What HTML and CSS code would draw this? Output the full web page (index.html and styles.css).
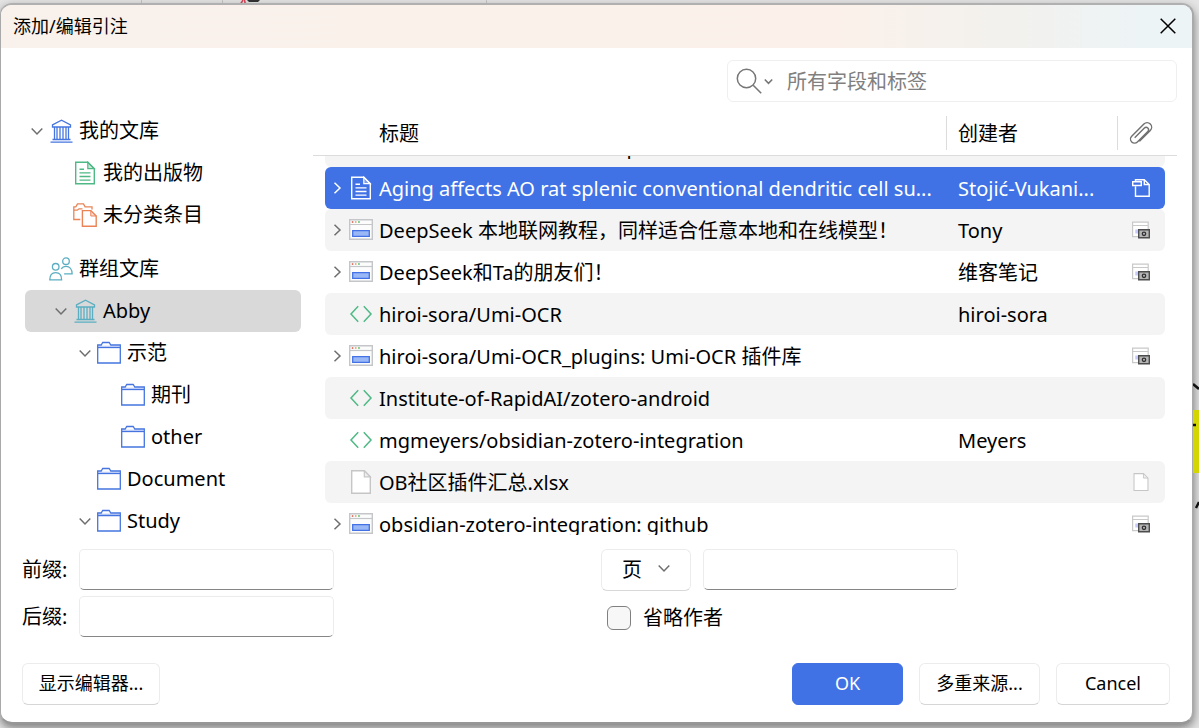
FILE: index.html
```html
<!DOCTYPE html>
<html lang="zh-CN">
<head>
<meta charset="utf-8">
<title>添加/编辑引注</title>
<link rel="stylesheet" href="styles.css">
</head>
<body>
<svg class="defs" aria-hidden="true">
  <symbol id="down" viewBox="0 0 12 12"><path d="M.7 3.5 6 9l5.3-5.500" fill="none" stroke="currentColor" stroke-width="1.500"/></symbol>
  <symbol id="right" viewBox="0 0 12 12"><path d="M3.500.7 9 6l-5.500 5.300" fill="none" stroke="currentColor" stroke-width="1.500"/></symbol>
  <symbol id="library" viewBox="0 0 24 24"><path d="M3.500 5.800 12.500 1.200l9 4.600v2.200h-18zM5.500 8v12.500M8 8v12.500M11 8v12.500M14 8v12.500M17 8v12.500M19.500 8v12.500M3.500 20.500h18M1.500 23.200h22" fill="none" stroke="currentColor" stroke-width="1.300"/></symbol>
  <symbol id="document" viewBox="0 0 24 24"><path d="M2.700 1.200h12.100l6.500 6.500v15.100H2.700z" fill="none" stroke="currentColor" stroke-width="1.400"/><path d="M14.800 1.200v6.500h6.500z" fill="currentColor" fill-opacity=".3" stroke="currentColor" stroke-width="1.200"/><path d="M6.500 8.200H11M6.500 11.900h11M6.500 15.500h11M6.500 19.100h11" stroke="currentColor" stroke-width="1.400"/></symbol>
  <symbol id="unfiled" viewBox="0 0 24 24"><path d="M7.300 16.500H.8V3.800h2L4.500.9h6l1.600 2.900H19v2.700M.8 7.200h3.500L6 5.800h3.500" fill="none" stroke="currentColor" stroke-width="1.300"/><path d="M9.400 7.600h8.400l5.400 5.400v10.300H9.400z" fill="#fff" stroke="currentColor" stroke-width="1.400"/><path d="M17.800 7.600V13h5.400z" fill="currentColor" fill-opacity=".25" stroke="currentColor"/></symbol>
  <symbol id="groups" viewBox="0 0 24 24"><g fill="none" stroke="currentColor" stroke-width="1.300"><circle cx="17" cy="4.200" r="3.300"/><circle cx="6.700" cy="9.800" r="3.300"/><path d="M12.300 12c.9-1.700 2.500-2.700 4.700-2.700 3.700 0 6.100 3 6.100 7.500h-8M.8 22.800c0-4.500 2.300-7.100 5.900-7.100s5.900 2.600 5.900 7.100z"/></g></symbol>
  <symbol id="folder" viewBox="0 0 24 24"><path d="M.7 22V4h3.500l1.500-2.500h6.500L13.800 4h9.500v18z" fill="none" stroke="currentColor" stroke-width="1.300"/><path d="M1 6.500h22" stroke="currentColor" stroke-width="1.300"/><path d="M1.400 4.600h21.200v1.600H1.400z" fill="currentColor" fill-opacity=".25"/></symbol>
  <symbol id="webpage" viewBox="0 0 24 24"><path d="M.7 1.700h22.600v19.600H.7z" fill="#fcfcfc" stroke="#c4c6ca" stroke-width="1.400"/><path d="M1 6.500h22" stroke="#c4c6ca" stroke-width="1.200"/><path d="M2.800 3.300h1.500v1.500H2.800z" fill="#e5523e"/><path d="M6 3.300h1.500v1.500H6z" fill="#eb9a48"/><path d="M9.200 3.300h1.500v1.500H9.200z" fill="#41ad5e"/><path d="M3.700 12.700h16.600v5.600H3.700z" fill="#9ab7f6" stroke="#4372e6" stroke-width="1.300"/></symbol>
  <symbol id="code" viewBox="0 0 24 24"><path d="M9.200 4.300 2 12l7.200 7.700M14.800 4.300 22 12l-7.200 7.700" fill="none" stroke="currentColor" stroke-width="1.500"/></symbol>
  <symbol id="blank" viewBox="0 0 24 24"><path d="M2.700.8h12.600l6 6v16.500H2.700z" fill="#fff" stroke="#c6c6c6" stroke-width="1.400"/><path d="M15.300.8v6h6z" fill="#eee" stroke="#c6c6c6" stroke-width="1.200"/></symbol>
  <symbol id="snapshot" viewBox="0 0 18 18"><path d="M.6 1.200h15.600v14.500H.6zM.6 4.500h15.600" fill="#fff" stroke="#c9c9c9" stroke-width="1.200"/><path d="M3.300 8.500h3v4h-3z" fill="#c5c9fb"/><path d="M6.700 8.700h10.600v8.100H6.700z" fill="#b5b5b5" stroke="#4d4d4d" stroke-width="1.400"/><circle cx="12" cy="12.800" r="1.700" fill="none" stroke="#333" stroke-width="1.300"/></symbol>
  <symbol id="pdf" viewBox="0 0 18 18"><path d="M3.500 7.500v9.700h13.700V5.500L12.300.8H3.500v1.700M12.300.8v4.700h4.900M.7 2.700h8.600v3.800H.7z" fill="none" stroke="currentColor" stroke-width="1.400"/></symbol>
</svg>
<svg class="backdrop backdrop-top" viewBox="0 0 500 5" aria-hidden="true"><path d="M141.500 0v3M222.500 0v3M486.500 0v3" stroke="#c5c5c5"/><path d="m243 0-3 5M244.500 0l.8 4" stroke="#d84357" stroke-width="1.500"/><path d="M247 0h13l-2 2h-9z" fill="#333"/></svg>
<svg class="backdrop backdrop-right" viewBox="0 0 6 140" aria-hidden="true"><path d="M0 30h6v63H0z" fill="#d4d600"/><path d="m0 4 6 5M0 45h3M6 122l-3 6" stroke="#111" stroke-width="2.500" fill="none"/></svg>

<main class="dialog">
  <header class="titlebar">
    <h1>添加/编辑引注</h1>
    <button class="close" type="button" aria-label="关闭"><svg viewBox="0 0 16 16"><path d="m.7.7 14.600 14.600M15.300.7.700 15.300" stroke="currentColor" stroke-width="1.500"/></svg></button>
  </header>

  <div class="search-row">
    <div class="search">
      <button class="search-mode" type="button" aria-label="搜索范围">
        <svg class="lens" viewBox="0 0 26 26"><circle cx="10.500" cy="10.500" r="9.200" fill="none" stroke="currentColor" stroke-width="1.500"/><path d="m17.200 17.200 8 8" stroke="currentColor" stroke-width="1.600"/></svg>
        <svg class="tiny" viewBox="0 0 9 9"><path d="M.8 2.500 4.500 6.300l3.700-3.800" fill="none" stroke="currentColor" stroke-width="1.600"/></svg>
      </button>
      <input type="search" aria-label="搜索" placeholder="所有字段和标签">
    </div>
  </div>

  <div class="panes">
    <ul class="tree">
      <li class="blue"><svg class="twisty"><use href="#down"/></svg><svg class="icon"><use href="#library"/></svg>我的文库</li>
      <li class="level1 green"><svg class="icon"><use href="#document"/></svg>我的出版物</li>
      <li class="level1 orange"><svg class="icon"><use href="#unfiled"/></svg>未分类条目</li>
      <li class="section teal"><svg class="icon"><use href="#groups"/></svg>群组文库</li>
      <li class="level1 teal current"><svg class="twisty"><use href="#down"/></svg><svg class="icon"><use href="#library"/></svg>Abby</li>
      <li class="level2 blue"><svg class="twisty"><use href="#down"/></svg><svg class="icon"><use href="#folder"/></svg>示范</li>
      <li class="level3 blue"><svg class="icon"><use href="#folder"/></svg>期刊</li>
      <li class="level3 blue"><svg class="icon"><use href="#folder"/></svg>other</li>
      <li class="level2 blue"><svg class="icon"><use href="#folder"/></svg>Document</li>
      <li class="level2 blue"><svg class="twisty"><use href="#down"/></svg><svg class="icon"><use href="#folder"/></svg>Study</li>
    </ul>

    <table class="items">
      <thead>
        <tr><th class="title" scope="col">标题</th><th scope="col">创建者</th><th class="attach" scope="col" aria-label="附件"><svg class="icon" viewBox="0 0 24 24"><path d="M10.500 20.200 21.300 9.400a4.500 4.500 0 0 0-6.400-6.400L2.700 15.200a4 4 0 0 0 5.700 5.700L18.800 10.400a2.400 2.400 0 0 0-3.400-3.400l-9.700 9.700" fill="none" stroke="currentColor" stroke-width="1.400"/></svg></th></tr>
      </thead>
      <tbody>
        <tr><td class="title"><svg class="twisty"><use href="#right"/></svg><svg class="icon"><use href="#webpage"/></svg><span>我为什么在主流硬件  用 DeepSeek 服务器与应用</span></td><td>维客笔记</td><td class="attach"></td></tr>
        <tr class="selected"><td class="title"><svg class="twisty"><use href="#right"/></svg><svg class="icon"><use href="#document"/></svg><span>Aging affects AO rat splenic conventional dendritic cell su...</span></td><td>Stojić-Vukani...</td><td class="attach"><svg class="mini"><use href="#pdf"/></svg></td></tr>
        <tr><td class="title"><svg class="twisty"><use href="#right"/></svg><svg class="icon"><use href="#webpage"/></svg><span>DeepSeek 本地联网教程，同样适合任意本地和在线模型！</span></td><td>Tony</td><td class="attach"><svg class="mini"><use href="#snapshot"/></svg></td></tr>
        <tr><td class="title"><svg class="twisty"><use href="#right"/></svg><svg class="icon"><use href="#webpage"/></svg><span>DeepSeek和Ta的朋友们！</span></td><td>维客笔记</td><td class="attach"><svg class="mini"><use href="#snapshot"/></svg></td></tr>
        <tr><td class="title leaf green"><svg class="icon"><use href="#code"/></svg><span>hiroi-sora/Umi-OCR</span></td><td>hiroi-sora</td><td class="attach"></td></tr>
        <tr><td class="title"><svg class="twisty"><use href="#right"/></svg><svg class="icon"><use href="#webpage"/></svg><span>hiroi-sora/Umi-OCR_plugins: Umi-OCR 插件库</span></td><td></td><td class="attach"><svg class="mini"><use href="#snapshot"/></svg></td></tr>
        <tr><td class="title leaf green"><svg class="icon"><use href="#code"/></svg><span>Institute-of-RapidAI/zotero-android</span></td><td></td><td class="attach"></td></tr>
        <tr><td class="title leaf green"><svg class="icon"><use href="#code"/></svg><span>mgmeyers/obsidian-zotero-integration</span></td><td>Meyers</td><td class="attach"></td></tr>
        <tr><td class="title leaf"><svg class="icon"><use href="#blank"/></svg><span>OB社区插件汇总.xlsx</span></td><td></td><td class="attach"><svg class="mini"><use href="#blank"/></svg></td></tr>
        <tr><td class="title"><svg class="twisty"><use href="#right"/></svg><svg class="icon"><use href="#webpage"/></svg><span>obsidian-zotero-integration: github</span></td><td></td><td class="attach"><svg class="mini"><use href="#snapshot"/></svg></td></tr>
      </tbody>
    </table>
  </div>

  <form class="options">
    <div class="affixes">
      <label for="prefix">前缀:</label><input class="field" id="prefix" type="text">
      <label for="suffix">后缀:</label><input class="field" id="suffix" type="text">
    </div>
    <div class="locator">
      <div class="locator-row">
        <div class="picker"><select aria-label="定位符类型"><option>页</option></select><svg class="twisty"><use href="#down"/></svg></div>
        <input class="field" type="text" aria-label="定位符">
      </div>
      <label class="omit"><input type="checkbox">省略作者</label>
    </div>
  </form>

  <footer class="actions">
    <button class="editor" type="button">显示编辑器...</button>
    <button class="ok" type="button">OK</button>
    <button class="multiple" type="button">多重来源...</button>
    <button class="cancel" type="button">Cancel</button>
  </footer>
</main>
</body>
</html>
```

FILE: styles.css
```css
* { box-sizing: border-box; }

body {
  margin: 0;
  height: 100vh;
  padding: 3px 5px 4px 0;
  overflow: hidden;
  background: #e4e4e4;
  color: #000;
  font: 20px/24px "Noto Sans", "Noto Sans CJK SC", sans-serif;
}

button, input, select { font: inherit; color: inherit; }
svg { flex: none; }

.defs { position: absolute; width: 0; height: 0; }
.backdrop { position: absolute; }
.backdrop-top { left: 0; top: 0; width: 500px; height: 5px; }
.backdrop-right { right: 0; top: 380px; width: 6px; height: 140px; z-index: 1; }

.dialog {
  position: relative;
  display: flex;
  flex-direction: column;
  height: 100%;
  overflow: hidden;
  background: #fff;
  border: 1px solid #a9a9a9;
  border-top: 2px solid #b0b0b0;
  border-bottom: 2px solid #979797;
  border-right: 2px solid #aaa;
  border-radius: 12px;
  box-shadow: 0 4px 10px rgba(0, 0, 0, .45);
}

.titlebar {
  display: flex;
  align-items: center;
  justify-content: space-between;
  height: 43px;
  flex: none;
  padding: 0 16px 2px 12px;
  background: linear-gradient(90deg, #f9f1ec, #fbf1ea 70%, #f2f1ee 85%, #edf4f6 96%);
}
.titlebar h1 { margin: 0; font-size: 18px; font-weight: 400; }
.close { display: flex; padding: 0; border: 0; background: none; }
.close svg { width: 16px; height: 16px; }

.search-row {
  display: flex;
  justify-content: flex-end;
  flex: none;
  padding: 12px 15px 8px;
}
.search {
  display: flex;
  align-items: center;
  width: 450px;
  height: 42px;
  padding: 0 8px;
  border: 1px solid #efefef;
  border-radius: 6px;
  color: #777;
}
.search-mode {
  display: flex;
  align-items: center;
  gap: 2px;
  padding: 0;
  border: 0;
  background: none;
}
.lens { width: 26px; height: 26px; }
.tiny { width: 9px; height: 9px; }
.search input {
  flex: 1;
  min-width: 0;
  margin-left: 14px;
  padding: 2px 0 0;
  border: 0;
  outline: 0;
  background: none;
}
.search input::placeholder { color: #808080; opacity: 1; }

.panes {
  display: flex;
  gap: 12px;
  flex: 1;
  min-height: 0;
  padding: 0 15px 0 24px;
}

.icon { width: 24px; height: 24px; }
.twisty { width: 12px; height: 12px; color: #6e6e6e; }
.mini { width: 18px; height: 18px; }
.blue .icon { color: #4675e0; }
.green .icon { color: #4fb985; }
.orange .icon { color: #ea8456; }
.teal .icon { color: #5baec2; }

.tree {
  flex: none;
  width: 276px;
  margin: 0;
  padding: 0;
  list-style: none;
}
.tree li {
  display: flex;
  align-items: center;
  gap: 6px;
  height: 42px;
  padding-left: 24px;
  border-radius: 6px;
}
.tree .twisty { margin-left: -18px; }
.tree .section { margin-top: 12px; }
.tree .level1 { padding-left: 48px; }
.tree .level2 { padding-left: 72px; }
.tree .level3 { padding-left: 96px; }
.tree .current { background: #d9d9d9; }

.items {
  display: flex;
  flex-direction: column;
  flex: 1;
  min-width: 0;
  margin-bottom: 8px;
}
.items tr {
  display: grid;
  grid-template-columns: minmax(0, 1fr) 171px 48px;
  align-items: center;
  flex: none;
  height: 42px;
  border-radius: 6px;
}
.items thead { padding: 0 12px; border-bottom: 1px solid #dcdcdc; }
.items thead tr { height: 45px; }
.items th {
  padding: 6px 11px 4px;
  border-left: 1px solid #dcdcdc;
  font-weight: 400;
  text-align: left;
}
.items th.title { padding-left: 54px; border: 0; }
.items th.attach { display: flex; padding: 5px 12px 5px 11px; color: #707070; }
.items tbody {
  display: flex;
  flex-direction: column;
  flex: 1;
  min-height: 0;
  overflow: hidden;
  padding: 0 12px;
}
/* The list is scrolled part of a row down. */
.items tbody tr:first-child { margin-top: -31px; }
.items tbody tr:nth-child(odd) { background: #f4f4f4; }
.items td {
  padding: 2px 0 0 12px;
  overflow: hidden;
  white-space: nowrap;
}
.items td.title {
  display: flex;
  align-items: center;
  gap: 6px;
  padding: 0 6px;
}
.items td.title span { padding-top: 2px; }
.items td.leaf { padding-left: 24px; }
.items td.attach { display: flex; padding: 0 15px; }
.items .selected { background: #4072e5; color: #fff; }
.items .selected .twisty, .items .selected .icon { color: #fff; }

.options {
  display: grid;
  grid-template-columns: 1fr 1fr;
  flex: none;
  padding: 6px 12px 26px 21px;
}
.affixes {
  display: grid;
  grid-template-columns: 45px 255px;
  gap: 6px 12px;
  align-items: center;
  white-space: nowrap;
}
.field {
  width: 255px;
  height: 41px;
  padding: 0 10px;
  border: 1px solid #ececec;
  border-bottom-color: #868686;
  border-radius: 5px;
  background: #fff;
}
.locator-row { display: flex; gap: 12px; }
.picker { position: relative; width: 90px; }
.picker select {
  width: 100%;
  height: 42px;
  padding: 0 20px;
  appearance: none;
  border: 1px solid #ececec;
  border-bottom-color: #d8d8d8;
  border-radius: 6px;
  background: #fff;
}
.picker .twisty { position: absolute; right: 21px; top: 13px; pointer-events: none; }
.omit { display: flex; align-items: center; gap: 12px; margin: 15px 0 0 6px; }
.omit input {
  width: 24px;
  height: 24px;
  margin: 0;
  appearance: none;
  border: 1px solid #808080;
  border-radius: 6px;
  background: #f7f7f7;
}

.actions {
  display: flex;
  gap: 16px;
  flex: none;
  padding: 0 22px 17px 21px;
}
.actions button {
  height: 42px;
  padding: 0 0 3px;
  border: 1px solid #ececec;
  border-bottom-color: #d6d6d6;
  border-radius: 6px;
  background: #fff;
  font-size: 18px;
}
.actions .editor { width: 138px; margin-right: auto; }
.actions .ok { width: 111px; background: #4072e5; border-color: #4072e5; color: #fff; }
.actions .multiple { width: 121px; }
.actions .cancel { width: 114px; }
```
